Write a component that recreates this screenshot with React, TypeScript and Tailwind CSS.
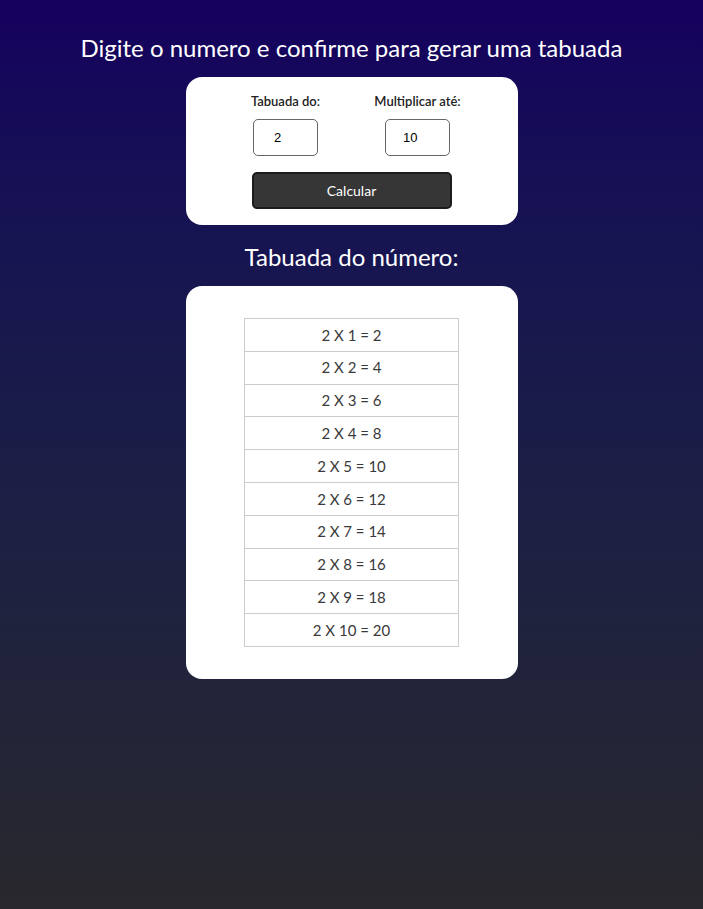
import React, { useState } from 'react';

export default function App() {
  const [base, setBase] = useState('2');
  const [limit, setLimit] = useState('10');
  const [rows, setRows] = useState<number[]>(Array.from({ length: 10 }, (_, i) => i + 1));
  const [num, setNum] = useState(2);

  const calcular = () => {
    const n = parseInt(base) || 0;
    const l = parseInt(limit) || 0;
    setNum(n);
    setRows(Array.from({ length: l }, (_, i) => i + 1));
  };

  return (
    <div className="min-h-screen w-full bg-gradient-to-b from-[#15005e] to-[#29282d] flex flex-col items-center font-['Lato','Liberation_Sans',sans-serif] text-white">
      <h1 className="mt-[33px] text-[24px] leading-[30px]">Digite o numero e confirme para gerar uma tabuada</h1>

      <div className="mt-[14px] w-[332px] bg-white rounded-[16px] flex flex-col items-center pt-[16px] pb-[16px] text-[#222]">
        <div className="flex gap-[32px]">
          <div className="w-[100px] flex flex-col items-center gap-[9px]">
            <label className="text-[13px] leading-[17px] font-semibold">Tabuada do:</label>
            <input
              value={base}
              onChange={(e) => setBase(e.target.value)}
              className="w-[65px] h-[37px] border border-[#666] rounded-[5px] pl-[20px] text-[13px] text-black font-['Liberation_Sans',sans-serif] outline-none"
            />
          </div>
          <div className="w-[100px] flex flex-col items-center gap-[9px]">
            <label className="text-[13px] leading-[17px] font-semibold whitespace-nowrap">Multiplicar até:</label>
            <input
              value={limit}
              onChange={(e) => setLimit(e.target.value)}
              className="w-[65px] h-[37px] border border-[#666] rounded-[5px] pl-[17px] text-[13px] text-black font-['Liberation_Sans',sans-serif] outline-none"
            />
          </div>
        </div>
        <button
          onClick={calcular}
          className="mt-[16px] w-[200px] h-[37px] bg-[#363636] border-2 border-[#1c1c1c] rounded-[5px] text-white text-[14px]"
        >
          Calcular
        </button>
      </div>

      <h2 className="mt-[17px] text-[24px] leading-[30px]">Tabuada do número:</h2>

      <div className="mt-[14px] mb-10 w-[332px] bg-white rounded-[16px] flex flex-col items-center py-[32px]">
        <table className="w-[215px] border-collapse text-[#3a3a3a] text-[15px]">
          <tbody>
            {rows.map((i) => (
              <tr key={i}>
                <td className="border border-[#ccc] h-[32.8px] text-center p-0">
                  {num} X {i} = {num * i}
                </td>
              </tr>
            ))}
          </tbody>
        </table>
      </div>
    </div>
  );
}
